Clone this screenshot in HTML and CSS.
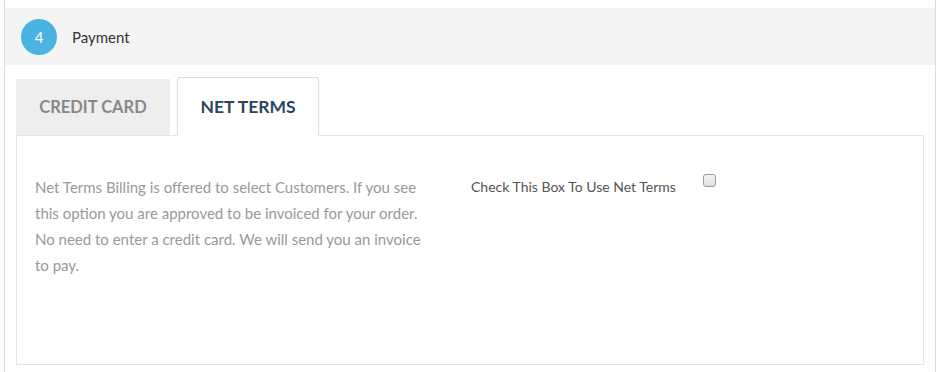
FILE: index.html
```html
<!DOCTYPE html>
<html>
<head>
<meta charset="utf-8">
<link rel="stylesheet" href="styles.css">
</head>
<body>
<div class="box">
  <div class="step-header">
    <span class="step-num">4</span>
    <span class="step-title">Payment</span>
  </div>
  <div class="tabs">
    <div class="tab">CREDIT CARD</div>
    <div class="tab active">NET TERMS</div>
  </div>
  <div class="panel">
    <p class="desc">Net Terms Billing is offered to select Customers. If you see this option you are approved to be invoiced for your order. No need to enter a credit card. We will send you an invoice to pay.</p>
    <div class="check-row">
      <label class="check-label" for="nt">Check This Box To Use Net Terms</label>
      <input type="checkbox" id="nt" class="check">
    </div>
  </div>
</div>
</body>
</html>
```

FILE: styles.css
```css
html, body {
  margin: 0;
  padding: 0;
  background: #fff;
  font-family: Lato, "Open Sans", sans-serif;
}
.box {
  margin-left: 4px;
  width: 932px;
  height: 372px;
  box-sizing: border-box;
  border-left: 1px solid #dcdcdc;
  border-right: 1px solid #dcdcdc;
  padding-top: 8px;
}
.step-header {
  height: 57px;
  background: #f4f4f4;
  display: flex;
  align-items: center;
  padding-left: 16px;
  gap: 15px;
}
.step-num {
  width: 36px;
  height: 36px;
  border-radius: 50%;
  background: #4ab3e2;
  color: #fff;
  font-size: 15px;
  display: flex;
  align-items: center;
  justify-content: center;
}
.step-title {
  font-size: 15px;
  color: #333;
}
.tabs {
  display: flex;
  align-items: flex-end;
  gap: 7px;
  margin: 12px 11px 0;
  position: relative;
  z-index: 1;
}
.tab {
  width: 154px;
  height: 56px;
  box-sizing: border-box;
  background: #eeeeee;
  color: #888;
  font-weight: 700;
  font-size: 16.5px;
  display: flex;
  align-items: center;
  justify-content: center;
}
.tab.active {
  width: 142px;
  height: 59px;
  background: #fff;
  color: #2c4660;
  font-size: 17.5px;
  border: 1px solid #ddd;
  border-bottom: none;
  border-radius: 3px 3px 0 0;
  margin-bottom: -1px;
  padding-bottom: 1px;
}
.panel {
  margin: 0 11px;
  height: 230px;
  box-sizing: border-box;
  border: 1px solid #e5e5e5;
  display: grid;
  grid-template-columns: 436px 1fr;
  padding: 38px 18px 0;
}
.desc {
  margin: 0;
  font-size: 15px;
  line-height: 26px;
  color: #999;
  width: 392px;
}
.check-row {
  display: flex;
  align-items: flex-start;
  padding-top: 5px;
}
.check-label {
  font-size: 14px;
  color: #555;
  line-height: 16px;
}
.check {
  appearance: none;
  -webkit-appearance: none;
  box-sizing: border-box;
  margin: -5px 0 0 27px;
  width: 13px;
  height: 13px;
  border: 1px solid #9a9a9a;
  border-radius: 3px;
  background: linear-gradient(#f6f6f6, #dedede);
}
```
